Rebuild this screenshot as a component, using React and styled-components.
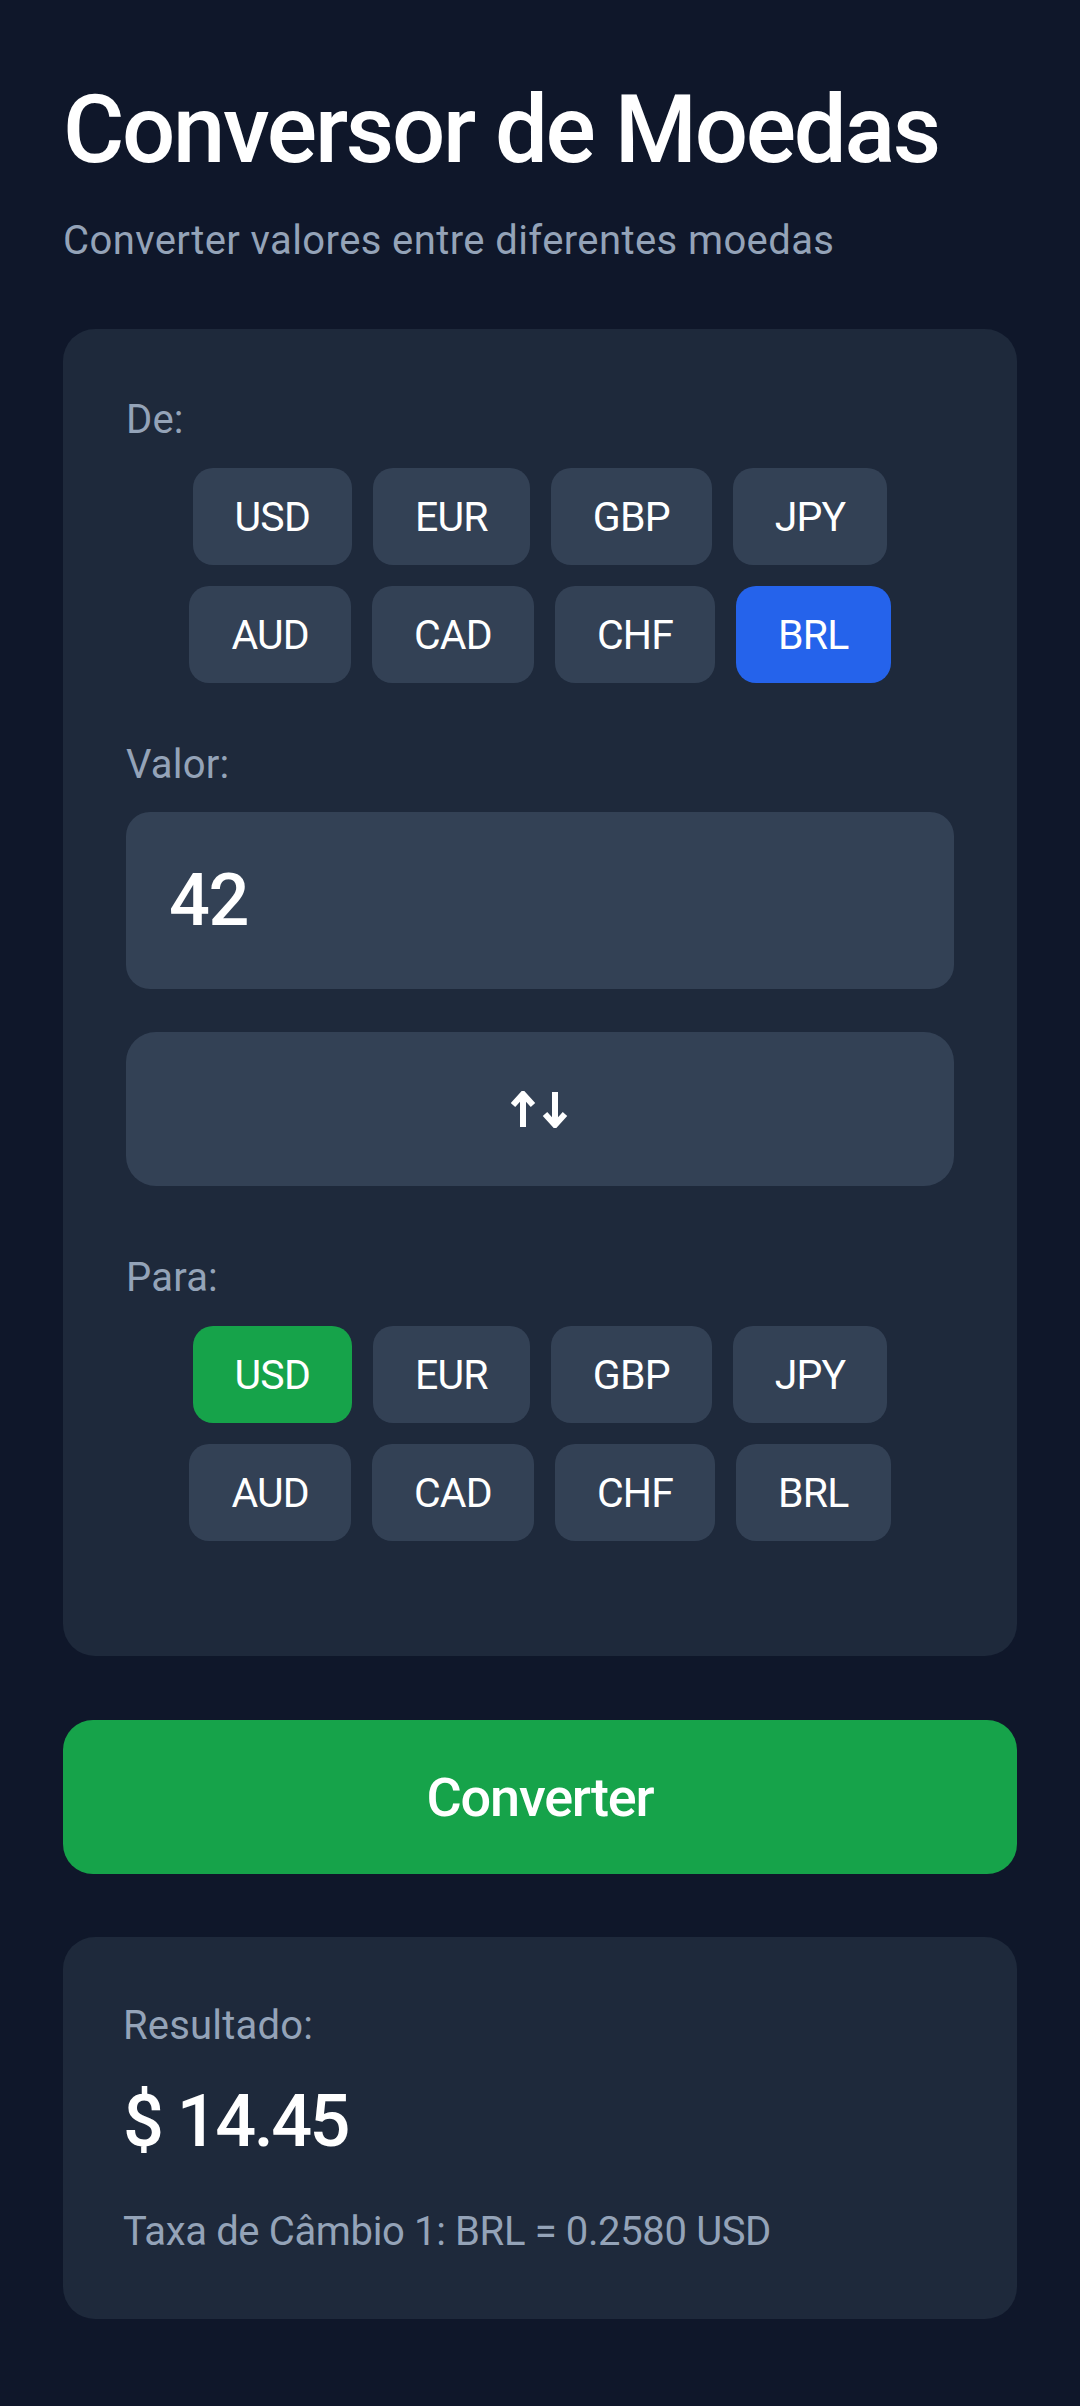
import React, { useState } from "react";
import styled, { createGlobalStyle } from "styled-components";

const GlobalStyle = createGlobalStyle`
  html, body {
    margin: 0;
    padding: 0;
    background: #0f172a;
  }
  body {
    font-family: Roboto, "Noto Sans", Arial, sans-serif;
    color: #f8fafc;
  }
  * { box-sizing: border-box; }
`;

const Page = styled.div`
  min-height: 2406px;
  background: #0f172a;
  padding: 73px 63px 0;
  display: flex;
  flex-direction: column;
`;

const Title = styled.h1`
  margin: 0;
  font-size: 94px;
  line-height: 115px;
  font-weight: 500;
  letter-spacing: -2.3px;
  color: #ffffff;
`;

const Subtitle = styled.p`
  margin: 27px 0 0;
  font-size: 40px;
  line-height: 52px;
  letter-spacing: 0.4px;
  color: #94a3b8;
`;

const Card = styled.section`
  margin-top: ${(p) => p.$mt}px;
  background: #1e293b;
  border-radius: 32px;
  padding: ${(p) => p.$pad};
  display: flex;
  flex-direction: column;
`;

const Label = styled.div`
  font-size: 40px;
  line-height: 52px;
  letter-spacing: 0.2px;
  color: #94a3b8;
  margin-top: ${(p) => p.$mt || 0}px;
`;

const Chips = styled.div`
  display: flex;
  flex-wrap: wrap;
  justify-content: center;
  gap: 21px;
  margin-top: 22px;
`;

const Chip = styled.button`
  height: 97px;
  padding: 0 42px;
  border: none;
  border-radius: 20px;
  font-family: inherit;
  font-size: 41px;
  letter-spacing: -0.8px;
  color: #ffffff;
  background: ${(p) => p.$bg || "#334155"};
  cursor: pointer;
`;

const ValueInput = styled.input`
  margin-top: 21px;
  height: 177px;
  width: 100%;
  border: none;
  border-radius: 24px;
  background: #334155;
  padding: 0 43px;
  font-family: inherit;
  font-size: 72px;
  font-weight: 500;
  letter-spacing: -1.5px;
  color: #ffffff;
  outline: none;
`;

const SwapButton = styled.button`
  margin-top: 43px;
  height: 154px;
  width: 100%;
  border: none;
  border-radius: 30px;
  background: #334155;
  display: flex;
  align-items: center;
  justify-content: center;
  cursor: pointer;
`;

const ConvertButton = styled.button`
  margin-top: 64px;
  height: 154px;
  width: 100%;
  border: none;
  border-radius: 30px;
  background: #16a34a;
  font-family: inherit;
  font-size: 54px;
  font-weight: 500;
  letter-spacing: -1.2px;
  color: #ffffff;
  cursor: pointer;
`;

const Amount = styled.div`
  margin-top: 27px;
  font-size: 72px;
  line-height: 86px;
  font-weight: 500;
  letter-spacing: -2.5px;
  color: #ffffff;
`;

const Rate = styled.div`
  margin-top: 41px;
  font-size: 40px;
  line-height: 52px;
  letter-spacing: -0.36px;
  color: #94a3b8;
`;

const CURRENCIES = ["USD", "EUR", "GBP", "JPY", "AUD", "CAD", "CHF", "BRL"];

function SwapIcon() {
  return (
    <svg width="59" height="37" viewBox="0 0 59 37" fill="none" stroke="#ffffff" strokeWidth="6" strokeLinecap="butt" strokeLinejoin="miter">
      <path d="M12 36 V4" />
      <path d="M2 14 L12 3 L22 14" />
      <path d="M44 1 V33" />
      <path d="M34 23 L44 34 L54 23" />
    </svg>
  );
}

export default function App() {
  const [from, setFrom] = useState("BRL");
  const [to, setTo] = useState("USD");
  const [value, setValue] = useState("42");

  return (
    <>
      <GlobalStyle />
      <Page>
        <Title>Conversor de Moedas</Title>
        <Subtitle>Converter valores entre diferentes moedas</Subtitle>

        <Card $mt={62} $pad="65px 63px 115px">
          <Label>De:</Label>
          <Chips>
            {CURRENCIES.map((c) => (
              <Chip key={c} $bg={c === from ? "#2563eb" : undefined} onClick={() => setFrom(c)}>
                {c}
              </Chip>
            ))}
          </Chips>

          <Label $mt={56}>Valor:</Label>
          <ValueInput value={value} onChange={(e) => setValue(e.target.value)} />

          <SwapButton onClick={() => { setFrom(to); setTo(from); }}>
            <SwapIcon />
          </SwapButton>

          <Label $mt={66}>Para:</Label>
          <Chips>
            {CURRENCIES.map((c) => (
              <Chip key={c} $bg={c === to ? "#16a34a" : undefined} onClick={() => setTo(c)}>
                {c}
              </Chip>
            ))}
          </Chips>
        </Card>

        <ConvertButton>Converter</ConvertButton>

        <Card $mt={63} $pad="63px 60px 61px">
          <Label>Resultado:</Label>
          <Amount>$ 14.45</Amount>
          <Rate>Taxa de Câmbio 1: BRL = 0.2580 USD</Rate>
        </Card>
      </Page>
    </>
  );
}
